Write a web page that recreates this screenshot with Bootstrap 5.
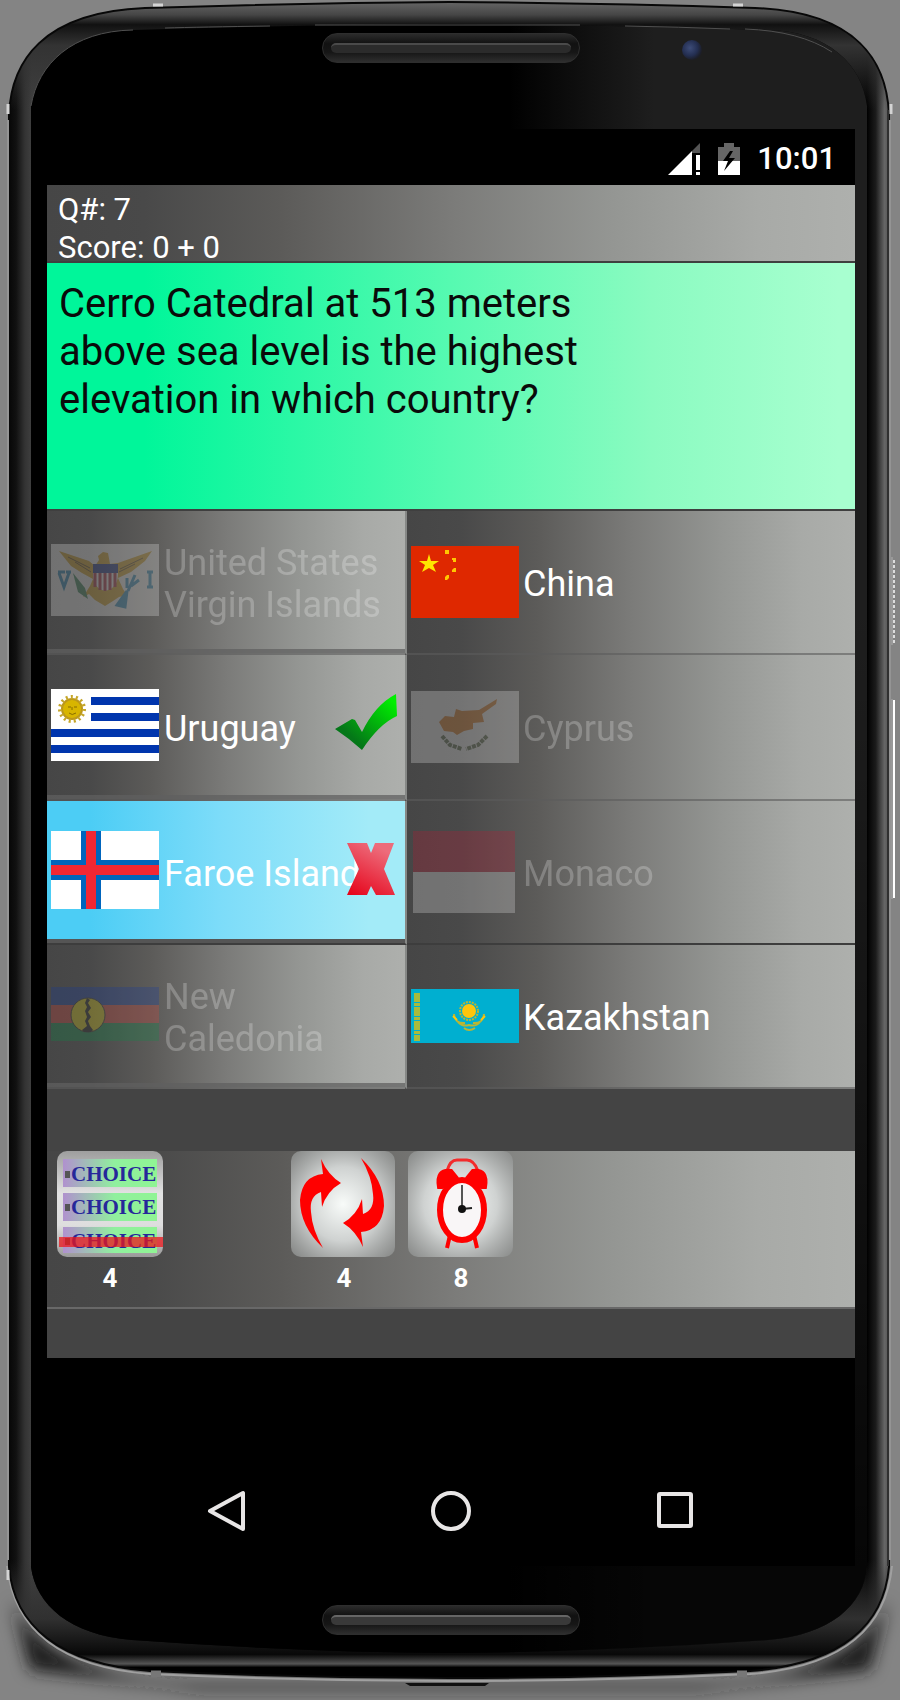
<!DOCTYPE html>
<html lang="en">
<head>
<meta charset="utf-8">
<meta name="viewport" content="width=device-width, initial-scale=1">
<title>Geography quiz</title>
<link href="https://cdn.jsdelivr.net/npm/bootstrap@5.3.0/dist/css/bootstrap.min.css" rel="stylesheet">
<style>
:root{--steel:linear-gradient(90deg,#464646 0,#494949 12%,#5c5b59 29%,#7b7b79 50%,#949693 70%,#a8aaa7 88%,#aeb0ad 100%)}
body{background:#848484;font-family:Roboto,"Liberation Sans",sans-serif;color:#fff}
.phone{padding:0 45px 0 47px;min-height:100vh}
.shell{inset:0;z-index:0}
.bezel{display:grid;grid-template-columns:1fr 258px 1fr;align-items:start;height:129px;padding-top:33px}
.grille{height:30px;border-radius:15px;border:1px solid #2e2e2e;background:linear-gradient(#2b2b2b,#111 35%,#161616 65%,#2e2e2e)}
.grille span{height:10px;margin:9px 8px 0;border-radius:5px;background:#2b2b2b;border-top:2px solid #4a4a4a}
.chin .grille span{background:#393939;border-top-color:#666}
.lens{width:20px;height:20px;margin:7px 0 0 102px;border-radius:50%;background:radial-gradient(circle at 40% 40%,#3d4c78 0,#242f52 45%,#1c1e28 70%,#232323)}
.status{height:56px;padding:3px 19px 0 0;gap:17px;font-size:31px;font-weight:500;line-height:40px}
.score{height:78px;padding:6px 11px 0;font-size:31px;line-height:38px;background:var(--steel);border-bottom:2px solid #3f3f3f}
.question{min-height:248px;padding:17px 240px 0 12px;font-size:40px;line-height:48px;color:#0a0a0a;background:linear-gradient(90deg,#00f69a 12%,#56fab1 50%,#8bfbc1 75%,#a8ffd0 98%);border-bottom:2px solid #3f3f3f}
.game{background:#444}
.answers{display:grid;grid-template-columns:360fr 448fr}
.answer{height:144px;padding:0 0 0 4px;gap:4px;border:0;border-bottom:2px solid #5b5b5b99;color:#fff;font-size:36px;line-height:42px;text-align:left;background:var(--steel) border-box}
.answer>span{padding-top:4px}
.answer.tall{height:146px}
.answer:nth-child(odd){gap:5px;border-right:2px solid #868886;box-shadow:inset 0 -4px #5f5f5fbb}
.answer:nth-child(odd) svg{margin-bottom:4px}
.answer.picked{background:linear-gradient(90deg,#4ccdf5 12%,#7cdcf9 48%,#a3ebf8 90%);box-shadow:inset 0 -4px #555;border-bottom-color:#3d3d3d}
.answer.picked + .answer{border-bottom-color:#3d3d3d}
.flag{width:108px;flex:none}
.gone>*{opacity:.23}
.marker{right:8px;top:39px;width:62px;height:56px}
.tools{margin-top:62px;height:158px;padding-left:10px;background:var(--steel);border-bottom:2px solid #686868}
.tool{width:117px;border:0;background:none;color:#fff;font-size:26px;font-weight:700;line-height:30px;text-align:left}
.tool svg{width:106px;height:106px}
.tool span{width:106px;margin-top:6px;text-align:center}
.foot{height:49px}
.navkeys{height:208px;padding-top:104px}
.navkeys button{width:224px;height:98px;border:0;background:none}
.chin{padding-bottom:65px}
.chin .grille{width:258px}
</style>
</head>
<body>
<main class="phone position-relative d-flex flex-column">
<svg class="shell position-absolute w-100 h-100" viewBox="0 0 900 1700" preserveAspectRatio="none" aria-hidden="true">
<defs>
<path id="outer" d="M9 115C11 62 42 12 145 8Q300 3 450 2Q600 3 755 8C858 12 887 62 889 115V1567C884 1625 842 1664 750 1671Q600 1678 450 1678Q300 1678 150 1671C58 1664 14 1625 9 1567Z"/>
<path id="inner" d="M31 106C38 64 72 31 133 30Q300 25 450 24Q600 25 767 30C828 31 862 64 867 106V1567C864 1605 830 1635 768 1640Q600 1652 450 1653Q300 1652 132 1640C70 1635 36 1605 31 1567Z"/>
<clipPath id="oc"><use href="#outer"/></clipPath>
<linearGradient id="rim" x1="0" x2="1" y1="0" y2="0"><stop offset="0" stop-color="#070707"/><stop offset=".008" stop-color="#111"/><stop offset=".018" stop-color="#333"/><stop offset=".026" stop-color="#404040"/><stop offset=".5" stop-color="#333"/><stop offset=".975" stop-color="#000"/><stop offset=".985" stop-color="#1c1c1c"/><stop offset=".995" stop-color="#666"/><stop offset="1" stop-color="#555"/></linearGradient>
<linearGradient id="top" x1="0" y1="2" x2="0" y2="110" gradientUnits="userSpaceOnUse"><stop offset="0" stop-color="#666"/><stop offset=".12" stop-color="#454545"/><stop offset=".21" stop-color="#111"/><stop offset=".4" stop-color="#333"/><stop offset="1" stop-color="#333" stop-opacity="0"/></linearGradient>
<linearGradient id="bot" x1="0" y1="1560" x2="0" y2="1678" gradientUnits="userSpaceOnUse"><stop offset="0" stop-color="#333" stop-opacity="0"/><stop offset=".5" stop-color="#303030"/><stop offset=".8" stop-color="#080808"/><stop offset=".88" stop-color="#555"/><stop offset=".91" stop-color="#000"/><stop offset="1" stop-color="#000"/></linearGradient>
<linearGradient id="sheen" x1="510" x2="690" y1="0" y2="0" gradientUnits="userSpaceOnUse"><stop offset="0" stop-color="#1f1f1f" stop-opacity="0"/><stop offset=".8" stop-color="#1e1e1e"/></linearGradient>
<linearGradient id="fade" x1="0" x2="0" y1="600" y2="1566" gradientUnits="userSpaceOnUse"><stop offset="0" stop-color="#000" stop-opacity="0"/><stop offset="1" stop-color="#000" stop-opacity=".8"/></linearGradient>
<filter id="soft" x="-20%" y="-100%" width="140%" height="300%"><feGaussianBlur stdDeviation="8"/></filter>
</defs>
<path d="M12 1600C40 1660 110 1680 200 1684H700C790 1680 860 1660 888 1600L870 1670L700 1690H200L30 1670Z" fill="#1b1b1b" filter="url(#soft)"/>
<path d="M7 1566C14 1628 58 1667 150 1674Q300 1681 450 1681Q600 1681 750 1674C842 1667 886 1628 892 1566" fill="none" stroke="#a0a0a0" stroke-width="2"/>
<path d="M405 1683H489L485 1686H410Z" fill="#111"/>
<use href="#outer" fill="url(#rim)"/>
<g clip-path="url(#oc)"><path d="M0 0H900V110H0Z" fill="url(#top)"/><path d="M0 1560H900V1680H0Z" fill="url(#bot)"/></g>
<use href="#outer" fill="none" stroke="#080808" stroke-width="2"/>
<use href="#inner" fill="#000"/>
<use href="#inner" fill="url(#sheen)"/>
<use href="#inner" fill="url(#fade)"/>
<path d="M31 106C38 64 72 31 133 30M165 28Q200 27 270 26M315 25H580M625 26Q680 27 730 29M745 29Q800 31 832 52" fill="none" stroke="#505050" stroke-width="1"/>
<path d="M153 5H163M733 5H743M8 104V114M891 104V114M8 1570V1580" stroke="#d4d4d4" stroke-width="3"/>
<path d="M151 1674H161M737 1674H747" stroke="#777" stroke-width="7"/>
<path d="M888 110V1566" stroke="#303030" stroke-width="2"/><path d="M8 120V1560M890 120V1560" stroke="#949494" stroke-width="2"/>
<path d="M894 560V644" stroke="#ddd" stroke-width="2" stroke-dasharray="3 2"/><path d="M894 700V898" stroke="#fff" stroke-width="2"/>
<path d="M892 557V645M892 699V899" stroke="#999" stroke-width="2"/>
</svg>

<div class="bezel position-relative">
<div></div><div class="grille d-flex"><span class="flex-fill"></span></div><div class="lens"></div>
</div>

<div class="position-relative">
<div class="status d-flex align-items-center justify-content-end bg-black">
<svg width="33" height="32" viewBox="0 0 33 32" role="img" aria-label="Signal"><path d="M0 32L24 8V32Z" fill="#fff"/><path d="M24 8L32 0V10H24Z" fill="#555"/><path d="M28 12H32V27H28ZM28 29H32V32H28Z" fill="#fff"/></svg>
<svg width="22" height="32" viewBox="0 0 22 32" role="img" aria-label="Battery charging"><path d="M6 0H16V4H22V18H0V4H6Z" fill="#666"/><path d="M0 18H22V32H0Z" fill="#fff"/><path d="M12 8L5 18H10L6 28L17 15H11L15 8Z" fill="#000"/></svg>
<span>10:01</span>
</div>

<section class="game">
<div class="score"><div>Q#: 7</div><div>Score: 0 + 0</div></div>
<h1 class="question m-0 fw-normal">Cerro Catedral at 513 meters above sea level is the highest elevation in which country?</h1>

<div class="answers">
<button type="button" class="answer gone d-flex align-items-center">
<svg class="flag" height="72" viewBox="0 0 108 72"><path d="M0 0H108V72H0Z" fill="#fff"/><path d="M8 7L38 17L44 22L48 16L47 12L52 8L57 9L59 20L67 19L101 7L94 17L80 28L67 34L72 45L76 51L68 53L62 57L54 62L44 56L38 50L32 53L39 42L42 35L31 29L20 22Z" fill="#dca51d"/><g fill="none" stroke="#5d4420"><path d="M17 13L39 24M24 18L40 28M92 14L69 25M84 20L68 28"/></g><path d="M42 27H67Q68 44 54 47Q41 44 42 27Z" fill="#fff"/><path d="M44 29V43M49 29V46M54 29V47M59 29V46M64 29V43" stroke="#b3263e" stroke-width="3"/><path d="M42 20H67V29H42Z" fill="#162a87"/><path d="M22 29L34 44L37 55L27 48Z" fill="#348655"/><path d="M76 47L66 61L74 63ZM77 47L84 31M76 44V34M80 42L88 36" fill="#238bc0" stroke="#238bc0" stroke-width="3"/><path d="M7 28H14M8 29L13 43L18 29M15 28H20M96 28H102M99 28V43M96 43H102" fill="none" stroke="#238bc0" stroke-width="3"/></svg>
<span>United States<br>Virgin Islands</span></button>

<button type="button" class="answer d-flex align-items-center">
<svg class="flag" height="72" viewBox="0 0 108 72"><path d="M0 0H108V72H0Z" fill="#df2800"/><path d="M18 8L20 15H28L22 19L25 26L18 22L11 26L14 19L8 15H16Z" fill="#ffe500"/><path d="M34 4H38V8H34ZM41 12H45V16H42V14H41ZM41 24L43 22H45V26H41ZM34 31L36 29H38V32L36 34H34Z" fill="#ffc800"/></svg>
<span>China</span></button>

<button type="button" class="answer tall position-relative d-flex align-items-center">
<svg class="flag" height="72" viewBox="0 0 108 72"><path d="M0 0H108V72H0Z" fill="#fff"/><path d="M40 8H108V16H40ZM40 24H108V32H40ZM0 40H108V48H0ZM0 56H108V64H0Z" fill="#0035ad"/><circle cx="21" cy="20" r="10" fill="#d8b500" stroke="#bb971c" stroke-width="2"/><circle cx="21" cy="20" r="12" fill="none" stroke="#c5a62a" stroke-width="4" stroke-dasharray="2 3"/><path d="M17 18H20M23 18H26M18 24Q21 27 25 24M21 18V21" fill="none" stroke="#876c00"/></svg>
<span>Uruguay</span>
<svg class="marker position-absolute" viewBox="0 0 62 56" role="img" aria-label="Correct"><defs><linearGradient id="tick" x1="0" y1="1" x2="1" y2="0"><stop offset=".25" stop-color="#047718"/><stop offset=".9" stop-color="#00ef00"/></linearGradient></defs><path d="M0 35L17 25L20 26L27 38Q40 11 61 0L62 22Q44 30 27 56Q15 45 0 35Z" fill="url(#tick)"/></svg></button>

<button type="button" class="answer tall gone d-flex align-items-center">
<svg class="flag" height="72" viewBox="0 0 108 72"><path d="M0 0H108V72H0Z" fill="#fff"/><path d="M28 31L34 25L43 26L45 18L51 20L68 19L86 8L85 13L71 23L73 31L62 32V38L53 40L46 44L42 41L33 40Z" fill="#e27817"/><path d="M31 45L39 54L51 58M76 45L67 54L55 58" fill="none" stroke="#586944" stroke-width="4" stroke-dasharray="4 1"/></svg>
<span>Cyprus</span></button>

<button type="button" class="answer picked position-relative d-flex align-items-center">
<svg class="flag" height="78" viewBox="0 0 108 78"><path d="M0 0H108V78H0Z" fill="#fff"/><path d="M30 0H50V78H30ZM0 29H108V49H0Z" fill="#0065bd"/><path d="M35 0H45V78H35ZM0 34H108V44H0Z" fill="#f22733"/></svg>
<span class="text-nowrap">Faroe Islands</span>
<svg class="marker position-absolute" viewBox="0 0 62 56" role="img" aria-label="Wrong"><defs><linearGradient id="cross" x1="0" y1="1" x2=".5" y2="0"><stop offset="0" stop-color="#e60017"/><stop offset="1" stop-color="#ed6c7b"/></linearGradient></defs><path d="M12 3H32L36 13L40 3H59L49 29L60 55H41L36 46L32 55H12L24 29Z" fill="url(#cross)"/></svg></button>

<button type="button" class="answer gone d-flex align-items-center">
<svg class="flag" height="82" viewBox="0 0 108 82"><path d="M2 0H104V41H2Z" fill="#ce1130"/><path d="M2 41H104V82H2Z" fill="#fff"/></svg>
<span>Monaco</span></button>

<button type="button" class="answer gone d-flex align-items-center">
<svg class="flag" height="54" viewBox="0 0 108 54"><path d="M0 0H108V18H0Z" fill="#0b36ad"/><path d="M0 18H108V36H0Z" fill="#ed4135"/><path d="M0 36H108V54H0Z" fill="#009543"/><circle cx="37" cy="28" r="17" fill="#fae600" stroke="#222"/><path d="M36 11L39 13L37 16L40 21L37 25L40 30L37 34L39 39L42 43L40 45H33L31 43L36 39L34 34L36 30L34 24L36 20L34 16Z" fill="#111"/></svg>
<span>New<br>Caledonia</span></button>

<button type="button" class="answer d-flex align-items-center">
<svg class="flag" height="54" viewBox="0 0 108 54"><path d="M0 0H108V54H0Z" fill="#00afd0"/><path d="M6 4V52" stroke="#a8bb3d" stroke-width="6" stroke-dasharray="9 1 3 1"/><circle cx="58" cy="22" r="7" fill="#fec50c"/><circle cx="58" cy="22" r="9" fill="none" stroke="#b9b633" stroke-width="2" stroke-dasharray="2 1"/><path d="M43 25Q44 35 54 34M73 25Q72 35 62 34M47 33Q52 38 58 36Q65 38 69 33M53 39Q58 43 64 39" fill="none" stroke="#b9b633" stroke-width="2"/><path d="M42 27L46 31M74 27L70 31" stroke="#fec50c" stroke-width="2"/></svg>
<span>Kazakhstan</span></button>
</div>

<div class="tools d-flex align-items-start">
<button type="button" class="tool p-0 d-flex flex-column" aria-label="Remove a choice, 4 left">
<svg viewBox="0 0 106 106"><defs><linearGradient id="bar"><stop offset="0" stop-color="#b091ce"/><stop offset=".55" stop-color="#90f09e"/><stop offset="1" stop-color="#90f494"/></linearGradient><linearGradient id="tile" x1="0" y1="0" x2="0" y2="1"><stop offset="0" stop-color="#9e9e9e"/><stop offset=".4" stop-color="#e2e2e2"/><stop offset=".7" stop-color="#dedede"/><stop offset="1" stop-color="#999"/></linearGradient></defs><rect width="106" height="106" rx="10" fill="url(#tile)"/><path d="M6 8H100V36H6ZM6 42H100V70H6ZM6 76H100V102H6Z" fill="url(#bar)"/><g fill="#555"><path d="M8 20H13V27H8ZM8 53H13V60H8ZM8 87H13V94H8Z"/></g><g fill="#26279a" font-family="Liberation Serif,serif" font-weight="700" font-size="21"><text x="14" y="30">CHOICE</text><text x="14" y="63">CHOICE</text><text x="14" y="97">CHOICE</text></g><path d="M2 86H106V96H2Z" fill="#ec171c" fill-opacity=".75"/></svg>
<span>4</span></button>
<div class="tool"></div>
<button type="button" class="tool p-0 d-flex flex-column" aria-label="Swap question, 4 left">
<svg viewBox="0 0 106 106"><defs><radialGradient id="glow" r=".7"><stop offset="0" stop-color="#f8fbf9"/><stop offset=".5" stop-color="#cfd2d1"/><stop offset="1" stop-color="#8c8e8d" stop-opacity=".8"/></radialGradient></defs><rect width="104" height="106" rx="10" fill="url(#glow)"/><path id="sweep" d="M30 8Q37 24 50 32Q36 40 31 56L30 41Q18 45 20 61Q21 78 32 97Q9 75 9 49Q11 25 32 23Z" fill="#f00"/><use href="#sweep" transform="rotate(180 51 52)"/></svg>
<span>4</span></button>
<button type="button" class="tool p-0 d-flex flex-column" aria-label="Extra time, 8 left">
<svg viewBox="0 0 106 106"><rect width="105" height="106" rx="10" fill="url(#glow)"/><path d="M39 20Q42 9 49 9H59Q66 9 70 20" fill="none" stroke="#f22c2c" stroke-width="3"/><path d="M31 36Q28 18 43 20L48 26L34 36ZM77 36Q80 18 65 20L60 26L74 36ZM42 84L39 97M66 84L69 97" fill="#f00" stroke="#f00" stroke-width="4"/><ellipse cx="54" cy="59" rx="22" ry="30" fill="#f9f6f7" stroke="#f00" stroke-width="6"/><path d="M54 34V58" stroke="#555" stroke-width="2"/><path d="M54 58L64 57" stroke="#222" stroke-width="2"/><circle cx="54" cy="58" r="4" fill="#111"/></svg>
<span>8</span></button>
</div>
<div class="foot"></div>
</section>
</div>

<nav class="navkeys bg-black position-relative d-flex justify-content-center" aria-label="System">
<button type="button" aria-label="Back"><svg width="40" height="44" viewBox="0 0 40 44"><path d="M3 22L36 4V40Z" fill="none" stroke="#e8e6e6" stroke-width="4" stroke-linejoin="round"/></svg></button>
<button type="button" aria-label="Home"><svg width="40" height="44" viewBox="0 0 40 44"><circle cx="20" cy="22" r="18" fill="none" stroke="#e8e6e6" stroke-width="4"/></svg></button>
<button type="button" aria-label="Overview"><svg width="40" height="44" viewBox="0 0 40 44"><rect x="4" y="5" width="32" height="32" rx="1" fill="none" stroke="#e8e6e6" stroke-width="4"/></svg></button>
</nav>
<div class="chin position-relative d-flex justify-content-center mt-auto"><div class="grille d-flex"><span class="flex-fill"></span></div></div>
</main>
<script src="https://cdn.jsdelivr.net/npm/bootstrap@5.3.0/dist/js/bootstrap.bundle.min.js"></script>
</body>
</html>
